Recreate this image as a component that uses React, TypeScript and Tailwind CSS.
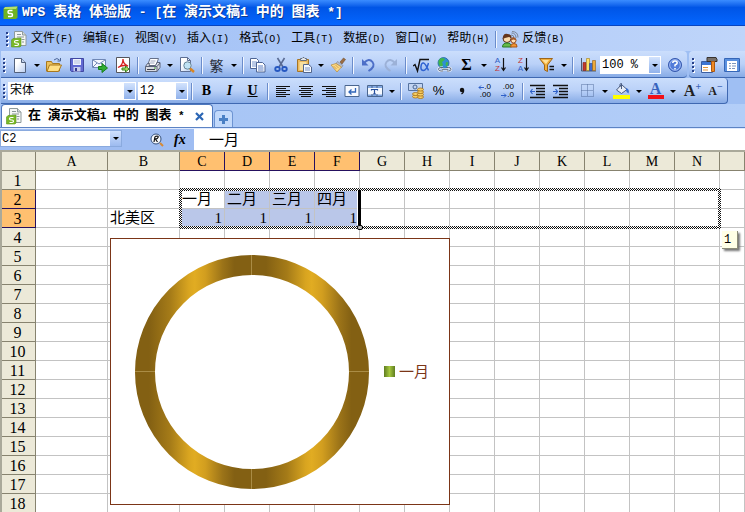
import React, { ReactNode } from "react";

const MONO = "font-['Liberation_Mono','Noto_Sans_CJK_SC',monospace]";
const SERIF = "font-['Liberation_Serif','Noto_Sans_CJK_SC',serif]";

/* Chinese runs keep the surrounding size; Latin runs use the half-width size. */
function Mixed({ text, latin }: { text: string; latin: string }) {
  const runs = text.match(/[\u4e00-\u9fff]+|[^\u4e00-\u9fff]+/g) ?? [];
  return (
    <>
      {runs.map((run, i) =>
        /[\u4e00-\u9fff]/.test(run) ? (
          <span key={i}>{run}</span>
        ) : (
          <span key={i} className={latin}>
            {run}
          </span>
        ),
      )}
    </>
  );
}

function Svg({ children }: { children: ReactNode }) {
  return (
    <svg width="16" height="16" viewBox="0 0 16 16" fill="none" aria-hidden="true">
      {children}
    </svg>
  );
}

function Tool({ label, children }: { label: string; children: ReactNode }) {
  return (
    <button type="button" aria-label={label} className="flex h-6 w-[23px] shrink-0 items-center justify-center text-black">
      {children}
    </button>
  );
}

function Caret() {
  return <span className="block border-x-[3px] border-t-[3px] border-x-transparent border-t-black" />;
}

function Drop({ label }: { label: string }) {
  return (
    <button type="button" aria-label={label} className="flex h-6 w-[11px] shrink-0 items-center justify-center">
      <Caret />
    </button>
  );
}

function Sep() {
  return (
    <span className="flex w-[7px] shrink-0 justify-center">
      <span className="h-[17px] w-[2px] border-l border-[#6a8ccb] bg-[#f1f6ff]" />
    </span>
  );
}

function Grip() {
  return (
    <span className="mx-[2px] grid w-[3px] shrink-0 gap-[2px]">
      {[0, 1, 2, 3].map((n) => (
        <span key={n} className="h-[2px] w-[2px] bg-[#27418a] shadow-[1px_1px_0_#ffffff]" />
      ))}
    </span>
  );
}

function Combo({ label, value, width }: { label: string; value: string; width: string }) {
  return (
    <label className={`relative flex h-[18px] shrink-0 bg-white ${width}`}>
      <select aria-label={label} defaultValue={value} className={`h-full w-full appearance-none pl-[2px] text-xs leading-4 outline-none ${MONO}`}>
        <option>{value}</option>
      </select>
      <span className="pointer-events-none absolute top-px right-px bottom-px flex w-[11px] items-center justify-center bg-linear-to-b from-[#d3e3fd] to-[#91b2eb]">
        <Caret />
      </span>
    </label>
  );
}

function WpsLogo() {
  return (
    <svg width="15" height="14" viewBox="0 0 15 14" aria-hidden="true">
      <path d="M2 1.500 14.500.5v11l-1.500 1.500H.5V3z" fill="#6fb322" />
      <path d="M2 1 14.500.5 13 3H.5z" fill="#b5e06a" />
      <path d="M9.500 4.500H6.500Q5 4.500 5 6T6.500 7.500H8Q9.500 7.500 9.500 9T8 10.500H5" fill="none" stroke="#fff" strokeWidth="1.500" />
    </svg>
  );
}

function DocLogo() {
  return (
    <svg width="16" height="17" viewBox="0 0 16 17" aria-hidden="true">
      <path d="M3.500.5h8L15 4v10.500H3.500z" fill="#f6f7f5" stroke="#8e9a9c" />
      <path d="M11.500.5V4H15" fill="#d3dad8" stroke="#8e9a9c" />
      <path d="M6 3.500h4M6 6h7M10.500 8.500h3M11 11h2" stroke="#8b9898" />
      <path d="M2 7.500 10 7v8l-1 1H.5V9z" fill="#79b828" stroke="#5a991b" strokeWidth=".6" />
      <path d="M7.500 9.500H5Q3.500 9.500 3.500 10.700T5 12H6Q7.500 12 7.500 13.200T6 14.500H3.500" fill="none" stroke="#fff" strokeWidth="1.200" />
    </svg>
  );
}

const icons = {
  blank: (
    <Svg>
      <path d="M2.500 1.500h7l4 4v10h-11z" fill="url(#page)" stroke="#52617c" />
      <path d="M9.500 1.500v4h4" fill="#c4d4ee" stroke="#52617c" />
    </Svg>
  ),
  open: (
    <Svg>
      <path d="M.5 14V4.500h5l1 2h7V14z" fill="#ecc15d" stroke="#a8781e" />
      <path d="M1 14.500 3.500 8h12l-3 6.500z" fill="#ffdf86" stroke="#a8781e" />
      <path d="M8 3q3-3 5.500 0M14.500 1v3h-3" stroke="#4b6597" />
    </Svg>
  ),
  save: (
    <Svg>
      <path d="M1.500 1.500h13v13h-12l-1-1z" fill="#6169d2" stroke="#4148a2" />
      <path d="M4 2h8v6H4z" fill="#eef2fd" />
      <path d="M5 4h6M5 6h6" stroke="#b6bfdd" />
      <path d="M4.500 10h7v4.500h-7z" fill="#c8cdec" />
      <path d="M6 11h2v3H6z" fill="#343a92" />
    </Svg>
  ),
  mail: (
    <Svg>
      <path d="M.5 2.500h13v8H.5z" fill="#f5f8ff" stroke="#6f87b5" />
      <path d="m1 3 6 4 6-4M1 10l4-4M13 10 9 6" stroke="#6f87b5" />
      <path d="M6.500 9.500h3.500V6.500L15.500 11l-5.500 4.500v-3H6.500z" fill="#31ac32" stroke="#167f1b" />
    </Svg>
  ),
  pdf: (
    <Svg>
      <path d="M1.500.5h13v15h-13z" fill="#fff" stroke="#55565c" />
      <path d="M3 10.500q5-2 5-8.500Q8 7 13 9Q7 7.500 3 10.500" stroke="#d82020" strokeWidth="1.300" />
      <path d="M7 11h3.500V9l3.500 3-3.500 3v-2H7z" fill="#a8db5d" stroke="#3d8622" />
    </Svg>
  ),
  print: (
    <Svg>
      <path d="M5 1.500h8.500L11 8.500H2.500z" fill="#fff" stroke="#66718a" />
      <path d="M5.500 4h5M4.500 6h5" stroke="#9fa9c0" />
      <path d="m.5 9.500 2-3h2l-.5 2h6.500l1.500-3h3v5l-3 4H.5z" fill="#d9dce4" stroke="#5c657a" />
      <path d="M.5 9.500h11.500v5M12 9.500l3-3.500" stroke="#5c657a" />
      <path d="M2 12.500h8" stroke="#3a4052" />
      <path d="M9 11h2" stroke="#44a534" />
    </Svg>
  ),
  preview: (
    <Svg>
      <path d="M1.500.5h7l3 3v11h-10z" fill="url(#page)" stroke="#5e6f93" />
      <path d="M8.500.5v3h3" stroke="#5e6f93" />
      <circle cx="8.500" cy="8.500" r="3.700" fill="#c0e3f4" stroke="#6b8797" />
      <path d="m11 11.500 4 3.500" stroke="#d98522" strokeWidth="2.500" />
    </Svg>
  ),
  copy: (
    <Svg>
      <path d="M.5 1.500h6l2 2v8h-8z" fill="#fff" stroke="#4e6594" />
      <path d="M2 5h5M2 7h5M2 9h5" stroke="#7795cd" />
      <path d="M6.500 5.500h6l2.500 2.500v7H6.500z" fill="#fff" stroke="#4e6594" />
      <path d="M8 9h5M8 11h5.500M8 13h5.500" stroke="#5c7fc3" />
    </Svg>
  ),
  cut: (
    <Svg>
      <path d="m4.500 1 5.500 9M11.500 1 6 10" stroke="#5a6b93" strokeWidth="1.600" />
      <ellipse cx="4.500" cy="12" rx="2.300" ry="2" stroke="#2658c1" strokeWidth="1.800" />
      <ellipse cx="11.500" cy="12" rx="2.300" ry="2" stroke="#2658c1" strokeWidth="1.800" />
    </Svg>
  ),
  paste: (
    <Svg>
      <path d="M1.500 2.500h11v12h-11z" fill="#ebb95e" stroke="#a67526" />
      <path d="M4.500 3.500v-2h1.500l1-1h1l1 1h1.500v2z" fill="#e4e6ea" stroke="#66707f" />
      <path d="M3.500 5h7v8h-7z" fill="#f8df9f" />
      <path d="M7.500 7.500h5l3 2.500v5.500h-8z" fill="#f7faff" stroke="#54678d" />
      <path d="M9 11h5M9 13h5" stroke="#7893c8" />
    </Svg>
  ),
  brush: (
    <Svg>
      <path d="m10 5 3.500-4 2 1.500L12 7z" fill="#9a6c43" stroke="#76502e" strokeWidth=".6" />
      <path d="m7.500 4.500 5.500 4-1.500 2-5.500-4z" fill="#b8bdc8" stroke="#777f92" strokeWidth=".6" />
      <path d="M6 6.500 1 8l6 7 4.500-5z" fill="#fbd884" stroke="#b98937" strokeWidth=".7" />
      <path d="m3.500 9 3 3M5.500 8l3 3" stroke="#d7a652" />
    </Svg>
  ),
  undo: (
    <Svg>
      <path d="M4 6Q9 .5 12.500 5T8.500 14" stroke="#4d6fc7" strokeWidth="2" />
      <path d="M2 2v6.500h6.500z" fill="#4d6fc7" />
    </Svg>
  ),
  redo: (
    <Svg>
      <path d="M12 6Q7 .5 3.500 5T7.500 14" stroke="#9cb1d7" strokeWidth="2" />
      <path d="M14 2v6.500H7.500z" fill="#9cb1d7" />
    </Svg>
  ),
  root: (
    <Svg>
      <path d="m0 9 2-1.500L4.500 14 7 2.500h9" stroke="#111" strokeWidth="1.400" />
      <path d="M15.500 6q-2 7.500-5 7.500t-2.500-4T10.500 6T15.500 13.500" stroke="#2f62d1" strokeWidth="1.500" />
    </Svg>
  ),
  globe: (
    <Svg>
      <circle cx="7.500" cy="6" r="5.500" fill="#2f8fd4" stroke="#1b5b9c" strokeWidth=".7" />
      <path d="M4 1.500q4-1.500 5 1L6 5l1 3-2 2Q2 8 2.500 4zM10 5l2.500.5L11 9.500 9.500 8z" fill="#41b64a" />
      <path d="M7 10.500H5q-2.500 0-2.500 1.700T5 14h2M6 12.300h6M11 10.500h1.500q2.500 0 2.500 1.700T12.500 14H11" stroke="#eef3fb" strokeWidth="2.200" />
      <path d="M7 10.500H5q-2.500 0-2.500 1.700T5 14h2M6 12.300h6M11 10.500h1.500q2.500 0 2.500 1.700T12.500 14H11" stroke="#59657d" />
    </Svg>
  ),
  filter: (
    <Svg>
      <path d="M.5 1.500h13L8.500 8v6.500l-3-1.500V8z" fill="#f0ae3a" stroke="#9e6518" />
      <path d="M3 3h7L7 7z" fill="#ffe19a" />
      <path d="M10.500 9.500H15M10.500 12.500H15" stroke="#111" strokeWidth="1.500" />
    </Svg>
  ),
  chart: (
    <Svg>
      <path d="M1.500 1v13H16" stroke="#4e5a6e" />
      <path d="M3 5.500h3v8H3z" fill="#c23a2c" stroke="#84231a" strokeWidth=".6" />
      <path d="M6.500 1.500h3v12h-3z" fill="#ffe269" stroke="#a17a15" strokeWidth=".6" />
      <path d="M9.500 6.500h3v7h-3z" fill="#3d6bd0" stroke="#234494" strokeWidth=".6" />
      <path d="M12.500 3.500h3v10h-3z" fill="#eda93a" stroke="#91601a" strokeWidth=".6" />
    </Svg>
  ),
  help: (
    <Svg>
      <circle cx="8" cy="8" r="6.500" fill="#537bd9" stroke="#3558ac" />
      <circle cx="8" cy="8" r="5.300" stroke="#b9cdfa" strokeWidth=".8" />
      <path d="M5.800 6q0-2 2.200-2t2.200 2Q10.200 7 8 8v1.500M8 11v1.500" stroke="#fff" strokeWidth="1.500" />
    </Svg>
  ),
  design: (
    <svg width="18" height="16" viewBox="0 0 18 16" aria-hidden="true">
      <path d="M1.500 4.500h11v11h-11z" fill="#fff" stroke="#3b5fa2" />
      <path d="M2 5h10v3H2z" fill="#3d76d4" />
      <path d="M3 10.500h5M3 13h5" stroke="#e59639" />
      <path d="M7 .5h9l1 2v2H7z" fill="#77706a" stroke="#37322e" />
      <path d="M11.500 4.500h3v10h-3z" fill="#ef8b25" stroke="#ae5910" />
    </svg>
  ),
  panel: (
    <svg width="16" height="16" viewBox="0 0 16 16" aria-hidden="true">
      <path d="M.5 1.500h15v13H.5z" fill="#fff" stroke="#3566b7" />
      <path d="M1 2h14v2H1zM1 4h2v10H1zM13 4h2v10h-2z" fill="#5b91df" />
      <path d="M5 6.500h2M5 9h2M5 11.500h2M8 6.500h4M8 9h4M8 11.500h3" stroke="#7d96bd" />
    </svg>
  ),
  wrap: (
    <Svg>
      <path d="M1 2.500h14v11H1z" fill="#f7faff" stroke="#4a668f" />
      <path d="M11.500 5v4h-6M7.500 6.500 5 9l2.500 2.500" stroke="#3166b8" strokeWidth="1.300" />
    </Svg>
  ),
  merge: (
    <Svg>
      <path d="M.5 2.500h15v11H.5z" fill="#f5f9ff" stroke="#4a668f" />
      <path d="M1 3h14v2H1zM1 11.500h14V13H1z" fill="#83a8e2" />
      <path d="M5 2.500V5M10 2.500V5M5 11v2.500M10 11v2.500" stroke="#4a668f" />
      <path d="M4.500 7.500v-1h6v1M7.500 6.500V11M6 11h3" stroke="#254e9c" strokeWidth="1.200" />
    </Svg>
  ),
  money: (
    <Svg>
      <path d="M.5.5h14v7H.5z" fill="#c2d4f1" stroke="#55729f" />
      <circle cx="7" cy="4" r="2" stroke="#496694" />
      <g fill="#f7cf65" stroke="#a56e17" strokeWidth=".8">
        <ellipse cx="7.500" cy="13.500" rx="3" ry="1.500" />
        <ellipse cx="7.500" cy="11" rx="3" ry="1.500" />
        <ellipse cx="12.500" cy="14" rx="3" ry="1.500" />
        <ellipse cx="12.500" cy="11.500" rx="3" ry="1.500" />
        <ellipse cx="12.500" cy="9" rx="3" ry="1.500" />
        <ellipse cx="12.500" cy="6.500" rx="3" ry="1.500" />
      </g>
    </Svg>
  ),
  comma: (
    <Svg>
      <circle cx="8" cy="7" r="2.200" fill="#111" />
      <path d="M9.500 7q.5 2.500-2 4" stroke="#111" strokeWidth="1.300" />
    </Svg>
  ),
  outdent: (
    <Svg>
      <path d="M0 2.500h15M6 5.500h9M6 8.500h9M6 11.500h9M0 14.500h15" stroke="#111" strokeWidth="1.300" />
      <path d="M5 8.500H0M2.500 6l-2 2.500 2 2.500" stroke="#2f60c8" strokeWidth="1.200" />
    </Svg>
  ),
  indent: (
    <Svg>
      <path d="M0 2.500h15M6 5.500h9M6 8.500h9M6 11.500h9M0 14.500h15" stroke="#111" strokeWidth="1.300" />
      <path d="M0 8.500h5M2.500 6l2 2.500-2 2.500" stroke="#2f60c8" strokeWidth="1.200" />
    </Svg>
  ),
  borders: (
    <Svg>
      <path d="M1.500 1.500h12v12h-12zM7.500 1.500v12M1.500 7.500h12" stroke="#556f9f" strokeDasharray="1 1" />
    </Svg>
  ),
  fill: (
    <svg width="17" height="16" viewBox="0 0 17 16" fill="none" aria-hidden="true">
      <path d="m3.500 7 5-5.500L14 6.500 8.500 10.500z" fill="#e6edf9" stroke="#495b7f" />
      <path d="M7 4V1.500Q7 .5 8.500.5V6" stroke="#495b7f" />
      <path d="M13 5q4 1 2.500 5.500Q12.500 9 13 5" fill="#3d6fce" />
      <path d="M0 12h17v4H0z" fill="#ffff00" />
    </svg>
  ),
  feedback: (
    <svg width="17" height="17" viewBox="0 0 17 17" fill="none" aria-hidden="true">
      <path d="M9 4q3 0 3 3M9.500 2q4.500 0 4.500 5M10 .5q6 0 6 6" stroke="#7b8495" />
      <circle cx="5" cy="7.500" r="4" fill="#fbdcae" stroke="#5b2e16" />
      <path d="M1 8q0-6 4.500-5T9.500 7L7 6 3 7z" fill="#65351c" />
      <path d="M.5 16q0-4 4.500-4t4.500 4z" fill="#66ba49" stroke="#297b25" />
      <circle cx="11.500" cy="9.500" r="2.500" fill="#ffdfb2" stroke="#984d23" />
      <path d="M8.500 9.500q1-4 3.500-3t2.500 3l-3-1z" fill="#a1592b" />
      <path d="M8.500 16q0-3.500 3.500-3.500t3 3.500z" fill="#f39734" stroke="#a95314" />
    </svg>
  ),
};

function Lines({ rows }: { rows: number[][] }) {
  return (
    <Svg>
      {rows.map(([x1, x2], i) => (
        <path key={i} d={`M${x1} ${3.5 + i * 2}h${x2 - x1}`} stroke="#111" />
      ))}
    </Svg>
  );
}

function Sort({ first, second }: { first: string; second: string }) {
  const tone = (c: string) => (c === "A" ? "text-[#315fc4]" : "text-[#c23436]");
  return (
    <span className="flex items-center gap-px">
      <span className="grid text-[8px] leading-2 font-['Liberation_Sans',sans-serif]">
        <span className={tone(first)}>{first}</span>
        <span className={tone(second)}>{second}</span>
      </span>
      <svg width="5" height="14" viewBox="0 0 5 14" fill="none" aria-hidden="true">
        <path d="M2.500 0v12M.5 9.500l2 3 2-3" stroke="#111" strokeWidth="1.200" />
      </svg>
    </span>
  );
}

function Decimal({ top, bottom, arrow }: { top: string; bottom: string; arrow: "left" | "right" }) {
  const mark = (
    <svg width="6" height="5" viewBox="0 0 6 5" fill="none" aria-hidden="true">
      <path d={arrow === "left" ? "M6 2.500H1M3 .5l-2 2 2 2" : "M0 2.500h5M3 .5l2 2-2 2"} stroke="#2f60c8" />
    </svg>
  );
  return (
    <span className="grid justify-items-end text-[8px] leading-2 font-['Liberation_Sans',sans-serif]">
      <span className="flex items-center">
        {arrow === "left" && mark}
        {top}
      </span>
      <span className="flex items-center">
        {arrow === "right" && mark}
        {bottom}
      </span>
    </span>
  );
}

function MainToolbar() {
  return (
    <div className="flex h-[27px] gap-[2px] pl-px">
      <div className="flex shrink-0 items-center rounded-r border-b border-[#3f68b1] bg-linear-to-b from-[#cbdefc] via-[#bad1f8] to-[#87abe6] pt-[2px] pr-px">
        <Grip />
        <Tool label="新建">{icons.blank}</Tool>
        <Drop label="新建选项" />
        <Tool label="打开">{icons.open}</Tool>
        <Tool label="保存">{icons.save}</Tool>
        <Tool label="邮件">{icons.mail}</Tool>
        <Tool label="输出为 PDF">{icons.pdf}</Tool>
        <Sep />
        <Tool label="打印">{icons.print}</Tool>
        <Drop label="打印选项" />
        <Tool label="打印预览">{icons.preview}</Tool>
        <Sep />
        <Tool label="繁体转换">
          <span className="text-sm leading-4 text-[#252c39] font-['Noto_Sans_CJK_TC',sans-serif]">繁</span>
        </Tool>
        <Drop label="转换选项" />
        <Sep />
        <Tool label="复制">{icons.copy}</Tool>
        <Tool label="剪切">{icons.cut}</Tool>
        <Tool label="粘贴">{icons.paste}</Tool>
        <Drop label="粘贴选项" />
        <Tool label="格式刷">{icons.brush}</Tool>
        <Sep />
        <Tool label="撤销">{icons.undo}</Tool>
        <Tool label="恢复">{icons.redo}</Tool>
        <Sep />
        <Tool label="公式">{icons.root}</Tool>
        <Tool label="超链接">{icons.globe}</Tool>
        <Tool label="求和">
          <span className="text-base leading-4 font-bold font-['Liberation_Serif',serif]">Σ</span>
        </Tool>
        <Drop label="求和选项" />
        <Tool label="升序"><Sort first="A" second="Z" /></Tool>
        <Tool label="降序"><Sort first="Z" second="A" /></Tool>
        <Tool label="筛选">{icons.filter}</Tool>
        <Drop label="筛选选项" />
        <Sep />
        <Tool label="图表">{icons.chart}</Tool>
        <span className="mr-[2px] ml-px flex">
          <Combo label="显示比例" value="100 %" width="w-[61px]" />
        </span>
        <Tool label="帮助">{icons.help}</Tool>
      </div>
      <div className="flex min-w-0 flex-1 items-center overflow-hidden rounded-l border-b border-[#3f68b1] bg-linear-to-b from-[#cbdefc] via-[#bad1f8] to-[#87abe6] pt-[2px] pl-px">
        <Grip />
        <Tool label="设计">{icons.design}</Tool>
        <Tool label="任务窗格">{icons.panel}</Tool>
        <Sep />
      </div>
    </div>
  );
}

function FormatToolbar() {
  const letter = "font-['Liberation_Serif',serif] leading-4";
  return (
    <div className="flex h-[26px] pl-px">
      <div className="flex shrink-0 items-center rounded-r border-r border-b border-[#3f68b1] bg-linear-to-b from-[#cbdefc] via-[#bad1f8] to-[#87abe6] pt-px">
        <Grip />
        <Combo label="字体" value="宋体" width="w-[128px]" />
        <span className="ml-[2px] flex">
          <Combo label="字号" value="12" width="w-[50px]" />
        </span>
        <Sep />
        <Tool label="加粗"><span className={`text-sm font-bold ${letter}`}>B</span></Tool>
        <Tool label="倾斜"><span className={`text-sm font-bold italic ${letter}`}>I</span></Tool>
        <Tool label="下划线"><span className={`text-sm font-bold underline ${letter}`}>U</span></Tool>
        <Sep />
        <Tool label="左对齐"><Lines rows={[[1, 15], [1, 11], [1, 15], [1, 11], [1, 15], [1, 11]]} /></Tool>
        <Tool label="居中"><Lines rows={[[1, 15], [3, 13], [1, 15], [3, 13], [1, 15], [3, 13]]} /></Tool>
        <Tool label="右对齐"><Lines rows={[[1, 15], [5, 15], [1, 15], [5, 15], [1, 15], [5, 15]]} /></Tool>
        <Tool label="自动换行">{icons.wrap}</Tool>
        <Tool label="合并居中">{icons.merge}</Tool>
        <Drop label="合并选项" />
        <Sep />
        <Tool label="货币样式">{icons.money}</Tool>
        <Tool label="百分比"><span className="text-[13px] leading-4 font-['Liberation_Sans',sans-serif]">%</span></Tool>
        <Tool label="千位分隔">{icons.comma}</Tool>
        <Tool label="增加小数位"><Decimal top=".0" bottom=".00" arrow="left" /></Tool>
        <Tool label="减少小数位"><Decimal top=".00" bottom=".0" arrow="right" /></Tool>
        <Sep />
        <Tool label="减少缩进">{icons.outdent}</Tool>
        <Tool label="增加缩进">{icons.indent}</Tool>
        <span className="w-1" />
        <Tool label="边框">{icons.borders}</Tool>
        <Drop label="边框选项" />
        <Tool label="填充颜色">{icons.fill}</Tool>
        <Drop label="填充颜色选项" />
        <Tool label="字体颜色">
          <span className={`h-4 w-4 border-b-4 border-[#f01018] text-base font-bold text-[#3763bd] ${SERIF}`}>
            <span className="block leading-3">A</span>
          </span>
        </Tool>
        <Drop label="字体颜色选项" />
        <span className="w-[3px]" />
        <Tool label="增大字号">
          <span className={`flex text-base font-bold text-[#222] ${letter}`}>
            A<span className="text-[10px] leading-2 text-[#3964b5]">+</span>
          </span>
        </Tool>
        <Tool label="减小字号">
          <span className={`flex text-xs font-bold text-[#222] ${letter}`}>
            A<span className="text-[10px] leading-2 text-[#3964b5]">−</span>
          </span>
        </Tool>
      </div>
    </div>
  );
}

const menus = ["文件(F)", "编辑(E)", "视图(V)", "插入(I)", "格式(O)", "工具(T)", "数据(D)", "窗口(W)", "帮助(H)"];
const columns = ["A", "B", "C", "D", "E", "F", "G", "H", "I", "J", "K", "L", "M", "N", ""];
const cells: Record<string, string> = {
  C2: "一月", D2: "二月", E2: "三月", F2: "四月",
  B3: "北美区", C3: "1", D3: "1", E3: "1", F3: "1",
};

const CHECK = "bg-[repeating-conic-gradient(#111_0_25%,#ffffff_0_50%)] bg-[length:2px_2px]";

function Sheet() {
  const picked = (c: string) => c !== "" && "CDEF".includes(c);
  return (
    <main className="relative min-h-0 flex-1 overflow-hidden border-t-2 border-l-2 border-[#aaa99a] bg-white">
      <table className={`w-full table-fixed border-separate border-spacing-0 text-base leading-4 ${SERIF}`}>
        <colgroup>
          <col className="w-[34px]" />
          {columns.map((c, i) => (
            <col key={i} className={c === "" ? "" : i < 2 ? "w-[72px]" : "w-[45px]"} />
          ))}
        </colgroup>
        <thead>
          <tr className="h-[19px]">
            <td className="border-r border-b border-[#87836f] bg-[#ece9d8] p-0" />
            {columns.map((c, i) => (
              <th
                key={i}
                scope="col"
                className={`border-r border-b p-0 pt-px text-center text-sm leading-4 font-normal ${picked(c) ? "border-[#25105f] bg-[#ffc070]" : "border-[#87836f] bg-[#ece9d8]"}`}
              >
                {c}
              </th>
            ))}
          </tr>
        </thead>
        <tbody>
          {Array.from({ length: 18 }, (_, n) => n + 1).map((row) => (
            <tr key={row} className="h-[19px]">
              <th
                scope="row"
                className={`border-r border-b p-0 pt-px pr-[2px] text-center font-normal ${row === 2 || row === 3 ? "border-[#25105f] bg-[#ffc070]" : "border-[#87836f] bg-[#ece9d8]"}`}
              >
                {row}
              </th>
              {columns.map((c, i) => {
                const value = cells[`${c}${row}`];
                const tinted = picked(c) && (row === 3 || (row === 2 && c !== "C"));
                return (
                  <td
                    key={i}
                    className={`overflow-hidden border-r border-b border-[#c3c3c3] px-[2px] py-0 whitespace-nowrap ${tinted ? "bg-[#bac7e9]" : ""} ${value === "1" ? "text-right" : ""}`}
                  >
                    {value && <span className="block h-4 text-[15px] leading-[17px]">{value}</span>}
                  </td>
                );
              })}
            </tr>
          ))}
        </tbody>
      </table>

      <div className="pointer-events-none absolute top-9 left-[177px] h-[41px] w-[542px]">
        <span className={`absolute inset-x-0 top-0 h-[3px] ${CHECK}`} />
        <span className={`absolute inset-x-0 bottom-0 h-[3px] ${CHECK}`} />
        <span className={`absolute inset-y-0 left-0 w-[3px] ${CHECK}`} />
        <span className={`absolute inset-y-0 right-0 w-[3px] ${CHECK}`} />
        <span className="absolute top-[2px] bottom-[4px] left-[178px] w-1 border-l border-white bg-black" />
        <span className="absolute -bottom-px left-[178px] h-[5px] w-[6px] rounded-xs border border-black bg-[#b9b9b9]" />
      </div>

      <figure className="absolute top-[86px] left-[108px] flex h-[267px] w-[340px] items-center gap-[15px] border border-[#7b3517] bg-white pl-6">
        <svg width="234" height="234" viewBox="0 0 234 234" fill="none" role="img" aria-label="圆环图">
          <defs>
            <linearGradient id="gold" x1="0" y1="0" x2="117" y2="0" gradientUnits="userSpaceOnUse" spreadMethod="repeat">
              <stop offset="0.120" stopColor="#836013" />
              <stop offset="0.300" stopColor="#a57b18" />
              <stop offset="0.460" stopColor="#d9a520" />
              <stop offset="0.510" stopColor="#e1ac22" />
              <stop offset="0.600" stopColor="#d29e1f" />
              <stop offset="0.750" stopColor="#9b7318" />
              <stop offset="0.850" stopColor="#836013" />
            </linearGradient>
          </defs>
          <circle cx="117" cy="117" r="107" stroke="url(#gold)" strokeWidth="20" />
          <path d="M116.500 0v20M116.500 214v20M0 116.500h20M214 116.500h20" stroke="#aa8c45" />
        </svg>
        <figcaption className={`flex items-center gap-1 text-[15px] leading-4 text-[#7b3517] ${SERIF}`}>
          <span className="h-[11px] w-[11px] bg-linear-to-r from-[#5f7d22] via-[#a6c83d] to-[#5f7d22]" />
          一月
        </figcaption>
      </figure>

      <div role="tooltip" className={`absolute top-[79px] left-[720px] h-[18px] w-4 border-r border-b border-[#8c8c78] bg-[#ffffe6] pl-[2px] text-xs leading-[18px] shadow-[2px_2px_2px_#777777] ${MONO}`}>
        1
      </div>
    </main>
  );
}

export default function App() {
  return (
    <div className={`flex h-screen flex-col overflow-hidden bg-[#aac7f4] text-black ${MONO}`}>
      <svg width="0" height="0" className="absolute" aria-hidden="true">
        <defs>
          <linearGradient id="page" x1="0" y1="0" x2="1" y2="1">
            <stop offset="0.300" stopColor="#ffffff" />
            <stop offset="1" stopColor="#b9cdf0" />
          </linearGradient>
        </defs>
      </svg>

      <header className="flex h-[26px] shrink-0 items-center gap-1 border-b border-[#0845c0] bg-linear-to-b from-[#3a8cff] via-[#0055e6] via-30% to-[#0566ff] pl-[3px]">
        <WpsLogo />
        <h1 className="text-sm leading-5 font-bold whitespace-pre text-white [text-shadow:1px_1px_0_#0b3b95]">
          <Mixed text="WPS 表格 体验版 - [在 演示文稿1 中的 图表 *]" latin="text-[13px]" />
        </h1>
      </header>

      <nav className="flex h-[25px] shrink-0 items-center bg-linear-to-r from-[#9ebef5] to-[#bfd5fa] pt-px pl-1">
        <Grip />
        <DocLogo />
        <div className="ml-1 flex gap-[10px]">
          {menus.map((m) => (
            <button key={m} type="button" className="text-xs leading-4 whitespace-nowrap">
              <Mixed text={m} latin="text-[10px]" />
            </button>
          ))}
        </div>
        <span className="ml-[3px] flex">
          <Sep />
        </span>
        <button type="button" className="ml-[3px] flex items-center gap-[3px] text-xs leading-4 whitespace-nowrap">
          {icons.feedback}
          <span>
            <Mixed text="反馈(B)" latin="text-[10px]" />
          </span>
        </button>
      </nav>

      <div className="shrink-0 bg-[#9fbff3]">
        <MainToolbar />
        <FormatToolbar />
      </div>

      <div className="flex h-6 shrink-0 items-end gap-px border-b border-[#5c83c4] bg-linear-to-r from-[#a3c2f4] to-[#b3cef8] pl-px">
        <div className="flex h-[23px] w-[212px] items-center rounded-t border-x border-t border-[#4f78bd] bg-white pl-1">
          <DocLogo />
          <span className="ml-[6px] text-[13px] leading-4 font-bold whitespace-pre">
            <Mixed text="在 演示文稿1 中的 图表 *" latin="text-[11px]" />
          </span>
          <button type="button" aria-label="关闭" className="mr-2 ml-auto">
            <svg width="9" height="9" viewBox="0 0 9 9" aria-hidden="true">
              <path d="m1 1 7 7M8 1 1 8" stroke="#2b66b5" strokeWidth="2.200" />
            </svg>
          </button>
        </div>
        <button type="button" aria-label="新建标签" className="flex h-[17px] w-[19px] items-center justify-center rounded-t border-x border-t border-[#6d94d3] bg-[#c2d9fb]">
          <svg width="9" height="9" viewBox="0 0 9 9" aria-hidden="true">
            <path d="M4.500 0v9M0 4.500h9" stroke="#4a80c5" strokeWidth="3" />
          </svg>
        </button>
      </div>

      <div className="flex h-[22px] shrink-0 border-t border-[#dfeaff] bg-[#9fbdf2]">
        <div className="mt-px flex h-[17px] w-[122px] border border-[#8aaade] bg-white">
          <input aria-label="名称框" defaultValue="C2" className="min-w-0 flex-1 pl-px text-xs leading-4 outline-none" />
          <button type="button" aria-label="名称列表" className="flex w-[11px] items-center justify-center bg-linear-to-b from-[#cfe0fd] to-[#9dbbef]">
            <Caret />
          </button>
        </div>
        <div className="flex w-[72px] items-center gap-[10px] pl-7">
          <button type="button" aria-label="查找" className="flex">
            <svg width="14" height="14" viewBox="0 0 14 14" fill="none" aria-hidden="true">
              <circle cx="6" cy="6" r="5" fill="#f7faff" stroke="#34507c" />
              <path d="m10 10 3 3" stroke="#d68a35" strokeWidth="2" />
              <path d="M5 3.500 4 9M5 3.500q4-1 3 1t-3 1l2.500 3.500" stroke="#111" strokeWidth="1.200" />
            </svg>
          </button>
          <button type="button" aria-label="插入函数" className="text-sm leading-4 font-bold italic font-['Liberation_Serif',serif]">
            fx
          </button>
        </div>
        <input aria-label="编辑栏" defaultValue="一月" className={`min-w-0 flex-1 bg-white pl-[15px] text-[15px] leading-5 outline-none ${SERIF}`} />
      </div>

      <Sheet />
    </div>
  );
}
